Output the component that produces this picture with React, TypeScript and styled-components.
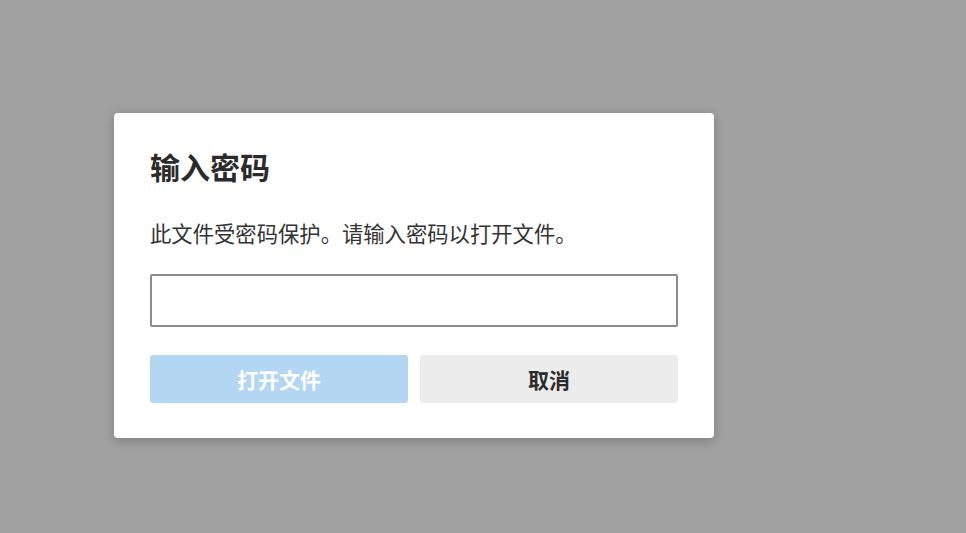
import React from 'react';
import styled, { createGlobalStyle } from 'styled-components';

const GlobalStyle = createGlobalStyle`
  html, body {
    margin: 0;
    padding: 0;
    background: #a1a1a1;
  }
  body {
    font-family: "Noto Sans CJK SC", "Noto Sans", sans-serif;
  }
`;

const Backdrop = styled.div`
  min-height: 100vh;
  box-sizing: border-box;
  background: #a1a1a1;
  padding: 113px 0 0 114px;
`;

const Dialog = styled.div`
  width: 600px;
  height: 325px;
  box-sizing: border-box;
  padding: 36px 36px 35px;
  background: #ffffff;
  border-radius: 4px;
  box-shadow: 0 3px 12px rgba(0, 0, 0, 0.22);
  display: flex;
  flex-direction: column;
`;

const Title = styled.h2`
  margin: 0;
  font-size: 30px;
  line-height: 34px;
  font-weight: 700;
  color: #2b2b2b;
`;

const Message = styled.p`
  margin: 36px 0 0;
  font-size: 21.33px;
  line-height: 28px;
  color: #333333;
`;

const PasswordInput = styled.input`
  margin-top: 27px;
  height: 53px;
  box-sizing: border-box;
  border: 2px solid #8c8c8c;
  border-radius: 2px;
  padding: 0 12px;
  font-size: 20px;
  outline: none;
  background: #fff;
`;

const Actions = styled.div`
  margin-top: 28px;
  display: grid;
  grid-template-columns: 1fr 1fr;
  gap: 12px;
`;

const Button = styled.button<{ $primary?: boolean }>`
  height: 48px;
  border: none;
  border-radius: 3px;
  font-family: "Noto Sans CJK SC", sans-serif;
  font-size: 21px;
  font-weight: 700;
  background: ${p => (p.$primary ? '#b3d6f2' : '#ececec')};
  color: ${p => (p.$primary ? '#ffffff' : '#2b2b2b')};
  cursor: ${p => (p.$primary ? 'default' : 'pointer')};
`;

export default function App() {
  return (
    <>
      <GlobalStyle />
      <Backdrop>
        <Dialog>
          <Title>输入密码</Title>
          <Message>此文件受密码保护。请输入密码以打开文件。</Message>
          <PasswordInput type="password" />
          <Actions>
            <Button $primary disabled>打开文件</Button>
            <Button>取消</Button>
          </Actions>
        </Dialog>
      </Backdrop>
    </>
  );
}
